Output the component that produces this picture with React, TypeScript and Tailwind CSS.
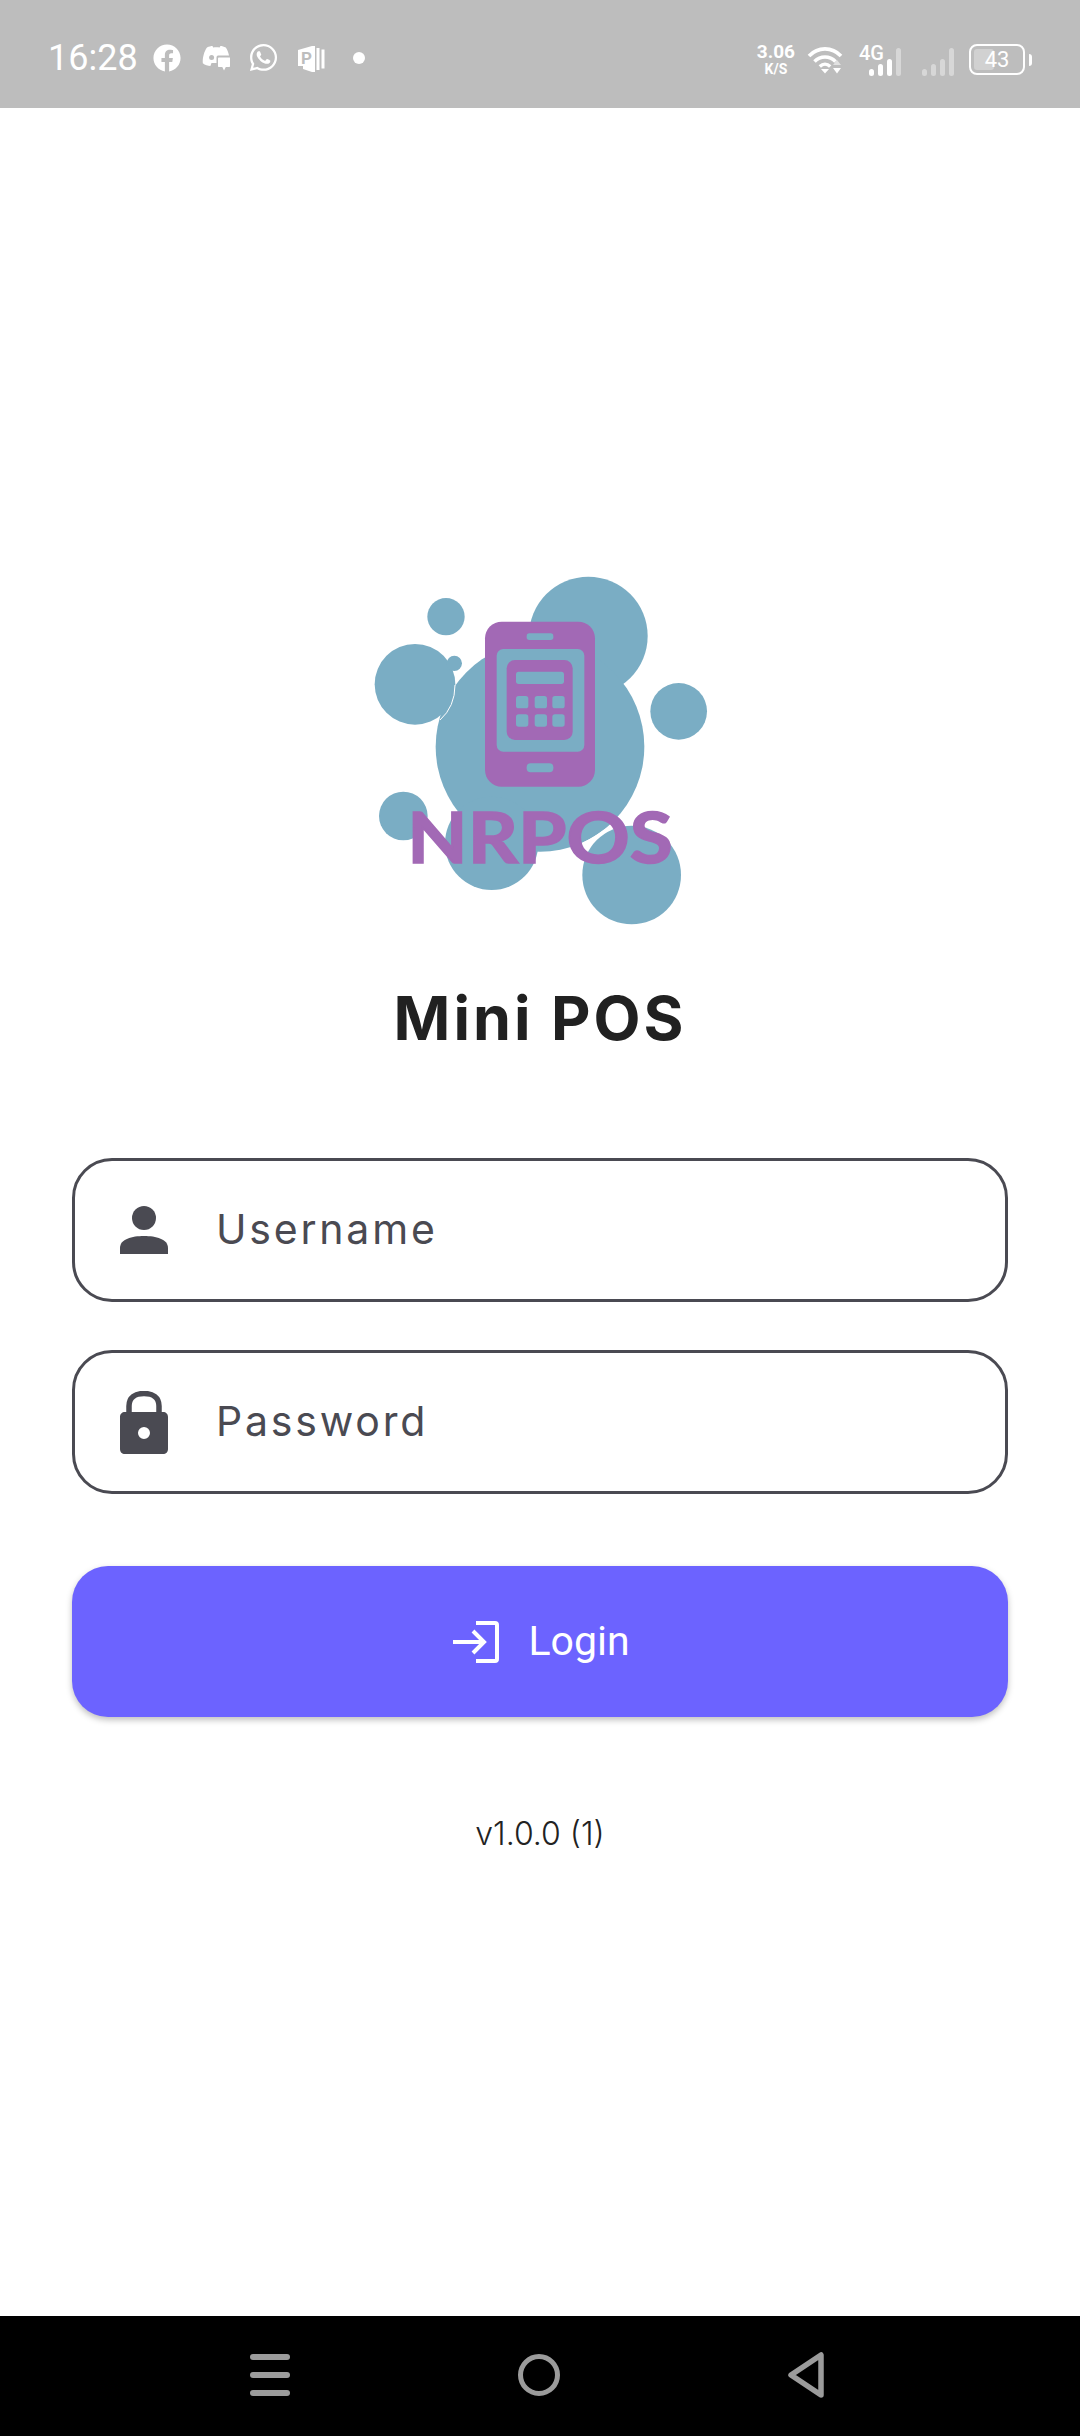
import React from "react";
import { FaFacebook, FaWhatsapp } from "react-icons/fa";

const DiscordIcon = () => (
  <svg width="28" height="25" viewBox="0 0 28 25" className="shrink-0" fill="white">
    <path d="M5 1.5 C7 .5 9 0 10.5 0 L11.2 1.6 C13.5 1.2 15.500 1.200 17.600 1.600 L18.400 0 C20 0 22 .6 23.800 1.600 C25.400 4 26.400 6.500 27 9.500 L16 9.500 C15 9.500 14.500 10.500 14.500 11.500 L14.500 17 L9.500 17 L8.400 20 C6 20 3 19 .8 17.200 C.4 12 2 5.500 5 1.500 Z" />
    <circle cx="9.600" cy="11.400" r="2.500" fill="#bdbdbd" />
    <path d="M17 11.500 L27.500 11.500 C28 11.500 28 12 28 12.500 L28 20 C28 20.600 27.700 21 27 21 L23.800 21 L22 24.500 L20.300 21 L17 21 C16.400 21 16 20.600 16 20 L16 12.500 C16 12 16.400 11.500 17 11.500 Z" />
  </svg>
);

const PublisherIcon = () => (
  <svg width="27" height="26" viewBox="0 0 27 26" className="shrink-0">
    <path d="M0 4 L14 0 L17 0 L17 26 L14 26 L5 23 L5 20 L0 20 Z" fill="white" />
    <rect x="18.500" y="2" width="3" height="22" fill="white" />
    <rect x="23.500" y="3.500" width="3" height="19" fill="white" />
    <text x="3" y="18" fontFamily="Roboto, sans-serif" fontWeight="700" fontSize="17" fill="#bdbdbd">P</text>
  </svg>
);

const WifiIcon = () => (
  <svg width="38" height="30" viewBox="0 0 38 30" className="shrink-0" fill="none">
    <path d="M2 11 C11 1.500 25 1.500 34 11" stroke="white" strokeWidth="3.600" />
    <path d="M7.500 16.500 C13.500 10.500 22.500 10.500 28.500 16.500" stroke="white" strokeWidth="3.600" />
    <path d="M12.800 21.500 C16 18.400 20 18.400 23.200 21.500" stroke="white" strokeWidth="3.400" />
    <path d="M14 24 L22 24 L18 28.500 Z" fill="white" />
    <path d="M30 15 L34 20 L26 20 Z" fill="white" opacity="0.55" />
    <path d="M26 23 L34 23 L30 28.500 Z" fill="white" />
  </svg>
);

const SignalBars = ({ dim }: { dim?: boolean }) => (
  <svg width="33" height="28" viewBox="0 0 33 28" className="shrink-0">
    <rect x="0" y="21" width="5" height="7" rx="2.500" fill="white" opacity={dim ? 0.4 : 1} />
    <rect x="9" y="16" width="5" height="12" rx="2.500" fill="white" opacity={dim ? 0.4 : 1} />
    <rect x="18" y="11" width="5" height="17" rx="2.500" fill="white" opacity={dim ? 0.4 : 1} />
    <rect x="27" y="0" width="5" height="28" rx="2.500" fill="white" opacity={0.4} />
  </svg>
);

const PersonIcon = () => (
  <svg width="48" height="48" viewBox="0 0 48 48" fill="#4a4a52">
    <circle cx="24" cy="12" r="12" />
    <path d="M0 48 L0 42 C0 33 12 30 24 30 C36 30 48 33 48 42 L48 48 Z" />
  </svg>
);

const LockIcon = () => (
  <svg width="48" height="63" viewBox="0 0 48 63" fill="#4a4a52">
    <path d="M9 22 L9 15 C9 6 15.500 2.500 24 2.500 C32.500 2.500 39 6 39 15 L39 22" fill="none" stroke="#4a4a52" strokeWidth="5.500" />
    <path fillRule="evenodd" d="M5 21 L43 21 C46 21 48 23 48 26 L48 58 C48 61 46 63 43 63 L5 63 C2 63 0 61 0 58 L0 26 C0 23 2 21 5 21 Z M24 36 A6 6 0 1 0 24 48 A6 6 0 1 0 24 36 Z" />
  </svg>
);

const LoginIcon = () => (
  <svg width="46" height="42" viewBox="0 0 46 42" fill="none" stroke="white" strokeWidth="4" className="shrink-0">
    <path d="M23 2 L42 2 C43.500 2 44 2.700 44 4 L44 38 C44 39.300 43.500 40 42 40 L23 40" />
    <path d="M0 21 L30 21 M20 10 L31 21 L20 32" />
  </svg>
);

const Logo = () => (
  <svg width="400" height="400" viewBox="0 0 1200 1200" className="shrink-0">
    <g fill="#7aadc4">
      <circle cx="745" cy="258" r="178" />
      <circle cx="318" cy="200" r="56" />
      <ellipse cx="600" cy="590" rx="313" ry="315" />
      <circle cx="1016" cy="484" r="85" />
      <circle cx="190" cy="798" r="73" />
      <circle cx="455" cy="880" r="140" />
    </g>
    <circle cx="225" cy="403" r="121" fill="#7aadc4" />
    <circle cx="343" cy="340" r="23" fill="#7aadc4" />
    <circle cx="875" cy="975" r="148" fill="#7aadc4" />
    <path d="M345 405 Q345 470 300 510" stroke="white" strokeWidth="3" fill="none" />
    <path d="M720 885 Q765 865 815 825" stroke="white" strokeWidth="5" fill="none" />
    <rect x="435" y="215" width="330" height="495" rx="50" fill="#a269b5" />
    <rect x="560" y="250" width="80" height="20" rx="8" fill="#7aadc4" />
    <rect x="470" y="297" width="263" height="308" rx="20" fill="#7aadc4" />
    <rect x="500" y="330" width="198" height="240" rx="25" fill="#a269b5" />
    <rect x="528" y="365" width="144" height="37" rx="8" fill="#7aadc4" />
    <g fill="#7aadc4">
      <rect x="528" y="438" width="37" height="37" rx="8" />
      <rect x="584" y="438" width="37" height="37" rx="8" />
      <rect x="637" y="438" width="37" height="37" rx="8" />
      <rect x="528" y="493" width="37" height="37" rx="8" />
      <rect x="584" y="493" width="37" height="37" rx="8" />
      <rect x="637" y="493" width="37" height="37" rx="8" />
    </g>
    <rect x="560" y="640" width="80" height="27" rx="12" fill="#7aadc4" />
    <text x="202" y="938" fontFamily="Lato, sans-serif" fontWeight="700" fontSize="215" textLength="796" lengthAdjust="spacingAndGlyphs" fill="#a269b5" stroke="#a269b5" strokeWidth="5">NRPOS</text>
  </svg>
);

export default function App() {
  return (
    <div className="flex flex-col w-[1080px] h-[2436px] bg-white overflow-hidden">
      {/* status bar */}
      <div className="flex items-center h-[108px] shrink-0 bg-[#bdbdbd] pl-[48px] pr-[48px] pt-[9px] text-white font-['Roboto',sans-serif]">
        <span className="text-[36px] leading-none w-[105px] -mt-[2px]">16:28</span>
        <FaFacebook className="w-[28px] h-[28px] shrink-0 -mt-[2px]" />
        <div className="ml-[21px]"><DiscordIcon /></div>
        <FaWhatsapp className="ml-[18px] w-[31px] h-[31px] shrink-0 -mt-[2px]" />
        <div className="ml-[19px]"><PublisherIcon /></div>
        <div className="ml-[28px] w-[12px] h-[12px] rounded-full bg-white -mt-[1px]" />
        <div className="ml-auto flex items-center">
          <div className="flex flex-col items-center font-bold mt-[1px]">
            <span className="text-[19px] leading-[20px]">3.06</span>
            <span className="text-[14px] leading-[14px]">K/S</span>
          </div>
          <div className="ml-[12px] mt-[2px]"><WifiIcon /></div>
          <div className="relative ml-[14px] w-[42px] h-[28px] mt-[6px]">
            <span className="absolute left-[0px] -top-[7px] text-[20px] leading-[24px] font-medium">4G</span>
            <div className="absolute left-[10px] top-0"><SignalBars /></div>
          </div>
          <div className="ml-[21px] mt-[6px]"><SignalBars dim /></div>
          <div className="ml-[14px] relative flex items-center justify-center w-[56px] h-[31px] rounded-[8px] border-[2.5px] border-white mt-[2px] overflow-hidden">
            <div className="absolute left-[3px] top-[3px] bottom-[3px] w-[20px] rounded-[3px] bg-white/30" />
            <span className="relative text-[22px] leading-none font-normal">43</span>
          </div>
          <div className="ml-[4px] w-[3px] h-[12px] rounded-r-sm bg-white mt-[2px]" />
        </div>
      </div>

      {/* login form */}
      <main className="flex-1 flex flex-col items-center px-[72px] pt-[442px]">
        <Logo />
        <h1 className="mt-[34px] text-[61px] leading-[68px] font-bold tracking-[3px] text-[#212121] font-['Inter',sans-serif]">Mini POS</h1>

        <div className="mt-[106px] w-full flex items-center h-[144px] rounded-[40px] border-[3px] border-[#4a4a52] pl-[45px]">
          <PersonIcon />
          <span className="ml-[48px] text-[41px] tracking-[2.8px] text-[#4a4a52] font-['Inter',sans-serif]">Username</span>
        </div>
        <div className="mt-[48px] w-full flex items-center h-[144px] rounded-[40px] border-[3px] border-[#4a4a52] pl-[45px]">
          <LockIcon />
          <span className="ml-[48px] text-[41px] tracking-[2.8px] text-[#4a4a52] font-['Inter',sans-serif]">Password</span>
        </div>

        <button className="mt-[72px] w-full h-[151px] flex items-center justify-center pl-[3px] rounded-[36px] bg-[#6c63ff] text-white shadow-[0_3px_6px_rgba(0,0,0,0.25)] font-['Roboto',sans-serif]">
          <LoginIcon />
          <span className="ml-[29px] text-[41px] leading-none">Login</span>
        </button>

        <p className="mt-[95px] text-[32px] leading-[44px] font-light text-[#222222] font-['Inter',sans-serif]">v1.0.0 (1)</p>
      </main>

      {/* nav bar */}
      <div className="h-[120px] shrink-0 bg-black flex items-center justify-center">
        <div className="flex items-center justify-between w-[574px] -ml-[6px] -mt-[2px]">
          <div className="flex flex-col gap-[12px] w-[40px]">
            <div className="h-[6px] rounded-sm bg-[#9b9b9b]" />
            <div className="h-[6px] rounded-sm bg-[#9b9b9b]" />
            <div className="h-[6px] rounded-sm bg-[#9b9b9b]" />
          </div>
          <div className="w-[42px] h-[42px] rounded-full border-[5px] border-[#9b9b9b]" />
          <svg width="36" height="46" viewBox="0 0 36 46" fill="none">
            <path d="M33 3 L33 43 L3 23 Z" stroke="#9b9b9b" strokeWidth="5.500" strokeLinejoin="round" />
          </svg>
        </div>
      </div>
    </div>
  );
}
